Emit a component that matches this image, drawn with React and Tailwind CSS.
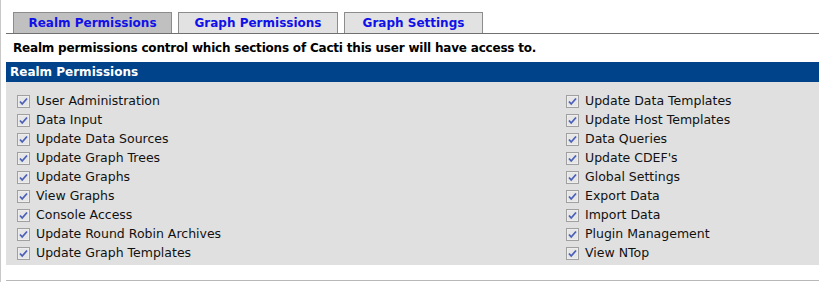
import React from 'react';

const left = [
  'User Administration',
  'Data Input',
  'Update Data Sources',
  'Update Graph Trees',
  'Update Graphs',
  'View Graphs',
  'Console Access',
  'Update Round Robin Archives',
  'Update Graph Templates',
];

const right = [
  'Update Data Templates',
  'Update Host Templates',
  'Data Queries',
  "Update CDEF's",
  'Global Settings',
  'Export Data',
  'Import Data',
  'Plugin Management',
  'View NTop',
];

const tabs = [
  { label: 'Realm Permissions', active: true, w: 'w-[159px]' },
  { label: 'Graph Permissions', active: false, w: 'w-[160px]' },
  { label: 'Graph Settings', active: false, w: 'w-[139px]' },
];

function Check() {
  return (
    <svg width="13" height="13" viewBox="0 0 13 13" className="shrink-0">
      <rect x="0.5" y="0.5" width="12" height="12" fill="#f4f4f4" stroke="#a0a0a0" />
      <rect x="1.5" y="1.5" width="10" height="10" fill="#e6e6e6" />
      <path d="M3 6.5 L5.2 9 L10 3.5" fill="none" stroke="#4a5fb8" strokeWidth="1.8" />
    </svg>
  );
}

function Row({ label }) {
  return (
    <div className="flex items-center h-[19px] gap-[6px]">
      <Check />
      <span className="text-[12.5px] text-[#111]">{label}</span>
    </div>
  );
}

export default function App() {
  return (
    <div className="w-[819px] h-[282px] bg-white border-l border-[#c8c8c8] font-['DejaVu_Sans',Verdana,sans-serif] overflow-hidden">
      <div className="pl-[5px] pt-[12px]">
        {/* Tabs */}
        <div className="flex gap-[6px] pl-[7px] border-b border-[#707070] h-[22px]">
          {tabs.map(t => (
            <div
              key={t.label}
              className={`${t.w} h-[21px] border border-b-0 border-[#8c8c8c] flex items-center justify-center text-[12px] font-bold text-[#1010e8] ${t.active ? 'bg-[#c0c0c0]' : 'bg-[#e2e2e2]'}`}
            >
              {t.label}
            </div>
          ))}
        </div>

        <p className="h-[28px] flex items-center pl-[7px] text-[12px] tracking-[-0.2px] font-bold text-black">
          Realm permissions control which sections of Cacti this user will have access to.
        </p>

        {/* Panel */}
        <div className="bg-[#00438a] h-[20px] flex items-center pl-[4px] text-[12px] font-bold text-white">
          Realm Permissions
        </div>
        <div className="bg-[#e0e0e0] h-[183px] flex pt-[10px] pl-[11px]">
          <div className="w-[549px]">
            {left.map(l => <Row key={l} label={l} />)}
          </div>
          <div>
            {right.map(l => <Row key={l} label={l} />)}
          </div>
        </div>
        <div className="h-[15px]" />
        <div className="border-t border-[#b8b8b8]" />
      </div>
    </div>
  );
}
